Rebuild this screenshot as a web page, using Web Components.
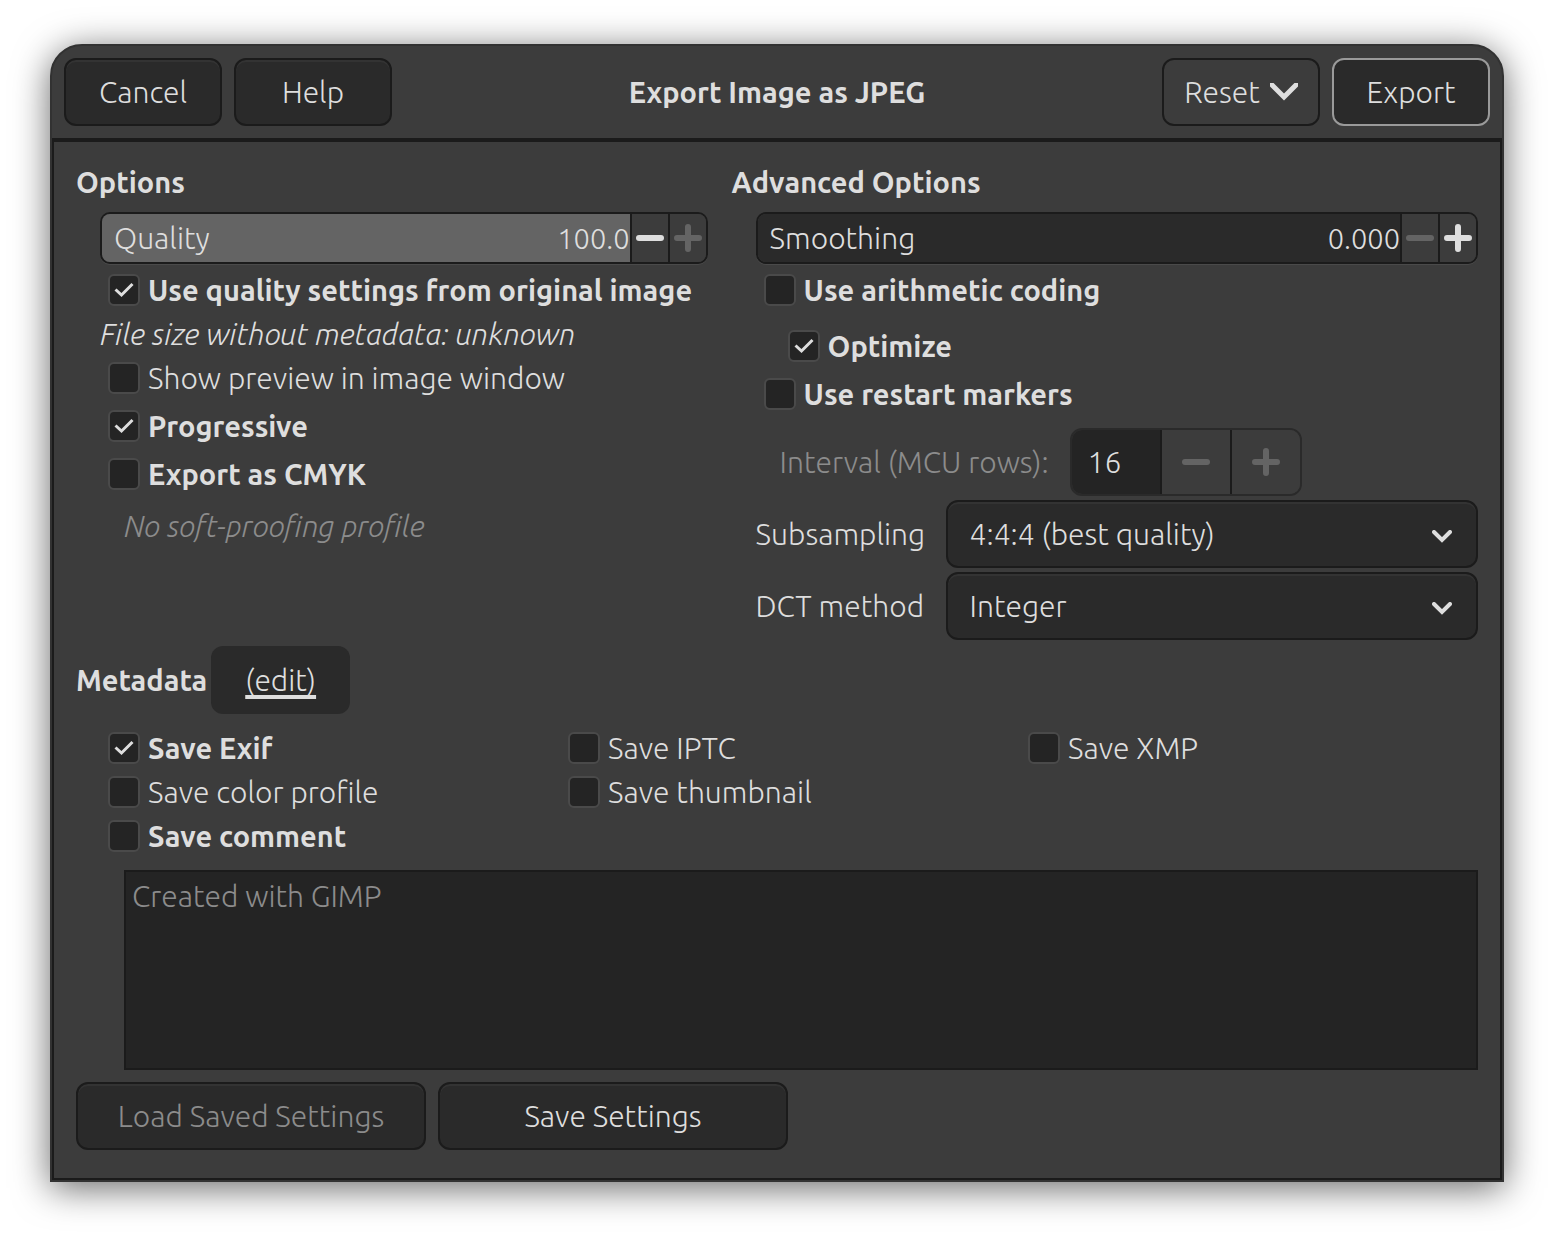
<!DOCTYPE html>
<html lang="en">
<head>
<meta charset="utf-8">
<meta name="viewport" content="width=device-width, initial-scale=1">
<title>Export Image as JPEG</title>
<style>
    :root {
        --bg: #3c3c3c;
        --button: #2a2a2a;
        --entry: #242424;
        --line: #1b1b1b;
        --edge: #323232;
        --text: #dedede;
        --dim: #8c8c8c;
        --fill: #646464;
        --strong-size: 29px;
    }

    body {
        margin: 0;
        padding: 44px 50px 56px;
        background: white;
        color: var(--text);
        font: 300 30px/44px Ubuntu, "Open Sans", "Noto Sans", sans-serif;
    }

    .column {
        display: flex;
        flex-direction: column;
        gap: 4px;
        padding-left: 24px;
    }

    .gap-above {
        margin-top: 8px;
    }

    .indent {
        margin-left: 24px;
    }

    .note {
        margin: -4px 0;
        font-style: italic;
    }

    .profile {
        margin: 4px 0 0 24px;
        color: var(--dim);
        font-style: italic;
    }

    .saves {
        display: grid;
        grid-template-columns: repeat(3, 1fr);
        column-gap: 2px;
        margin: 12px 0 12px 24px;
    }
</style>
</head>
<body>
<export-dialog heading="Export Image as JPEG">
    <dialog-button slot="start">Cancel</dialog-button>
    <dialog-button slot="start">Help</dialog-button>
    <dialog-button slot="end" kind="menu">Reset</dialog-button>
    <dialog-button slot="end" kind="default">Export</dialog-button>

    <option-group slot="options" heading="Options">
        <div class="column">
            <spin-scale label="Quality" value="100.0" fill="100%" at="max"></spin-scale>
            <check-option strong checked>Use quality settings from original image</check-option>
            <div class="note">File size without metadata: unknown</div>
            <check-option>Show preview in image window</check-option>
            <check-option strong checked>Progressive</check-option>
            <check-option strong>Export as CMYK</check-option>
            <div class="profile">No soft-proofing profile</div>
        </div>
    </option-group>

    <option-group slot="options" heading="Advanced Options">
        <div class="column">
            <spin-scale label="Smoothing" value="0.000" fill="0%" at="min"></spin-scale>
            <check-option strong>Use arithmetic coding</check-option>
            <check-option class="gap-above indent" strong checked>Optimize</check-option>
            <check-option strong>Use restart markers</check-option>
            <spin-entry class="gap-above indent" label="Interval (MCU rows):" value="16"></spin-entry>
            <combo-box label="Subsampling" value="4:4:4 (best quality)"></combo-box>
            <combo-box label="DCT method" value="Integer"></combo-box>
        </div>
    </option-group>

    <metadata-heading slot="metadata">Metadata</metadata-heading>
    <div slot="metadata" class="saves">
        <check-option strong checked>Save Exif</check-option>
        <check-option>Save IPTC</check-option>
        <check-option>Save XMP</check-option>
        <check-option>Save color profile</check-option>
        <check-option>Save thumbnail</check-option>
        <div></div>
        <check-option strong>Save comment</check-option>
    </div>
    <comment-box slot="metadata" value="Created with GIMP"></comment-box>

    <dialog-button slot="footer" kind="wide" disabled>Load Saved Settings</dialog-button>
    <dialog-button slot="footer" kind="wide">Save Settings</dialog-button>
</export-dialog>

<script>
// shared by every shadow root
const base = /* css */ `
    :host, *, *::before { box-sizing: border-box; }
    button, input, select, textarea { font: inherit; color: inherit; margin: 0; }
    h1, h2 { margin: 0; font-size: var(--strong-size); font-weight: 600; }
    svg { display: block; fill: none; stroke: currentColor; }
`

const minus = '<svg width="28" height="28" viewBox="0 0 28 28" stroke-width="6" stroke-linecap="round"><path d="M3 14h22"/></svg>'
const plus = '<svg width="28" height="28" viewBox="0 0 28 28" stroke-width="6" stroke-linecap="round"><path d="M3 14h22M14 3v22"/></svg>'

// The window frame: header bar, two columns of options, metadata and footer
class ExportDialog extends HTMLElement {
    connectedCallback() {
        this.attachShadow({ mode: 'open' }).innerHTML = /* html */ `
            <style>
            ${base}
            :host {
                display: block;
                border: 2px solid var(--edge);
                border-radius: 32px 32px 0 0;
                background: var(--bg);
                box-shadow: 0 6px 36px rgba(0, 0, 0, 0.6);
            }

            header {
                display: grid;
                grid-template-columns: 1fr auto 1fr;
                align-items: center;
                padding: 12px;
            }

            .start, .end, footer {
                display: flex;
                gap: 12px;
            }

            .end {
                justify-content: flex-end;
            }

            main {
                border: 2px solid var(--line);
                border-top-width: 4px;
                padding: 18px 22px 28px;
            }

            .options {
                display: grid;
                grid-template-columns: 11fr 13fr;
                gap: 24px;
                margin-bottom: 6px;
            }

            footer {
                margin-top: 12px;
            }
            </style>
            <header>
                <div class="start"><slot name="start"></slot></div>
                <h1>${this.getAttribute('heading')}</h1>
                <div class="end"><slot name="end"></slot></div>
            </header>
            <main>
                <div class="options"><slot name="options"></slot></div>
                <slot name="metadata"></slot>
                <footer><slot name="footer"></slot></footer>
            </main>
        `
    }
}

class OptionGroup extends HTMLElement {
    connectedCallback() {
        this.attachShadow({ mode: 'open' }).innerHTML = /* html */ `
            <style>
            ${base}
            :host { display: block; min-width: 0; }

            h2 {
                margin-bottom: 8px;
            }
            </style>
            <h2>${this.getAttribute('heading')}</h2>
            <slot></slot>
        `
    }
}

class DialogButton extends HTMLElement {
    connectedCallback() {
        const arrow = this.getAttribute('kind') === 'menu'
            ? '<svg width="28" height="18" viewBox="0 0 28 18" stroke-width="5"><path d="M-3-3 14 14 31-3"/></svg>'
            : ''

        this.attachShadow({ mode: 'open' }).innerHTML = /* html */ `
            <style>
            ${base}
            :host { display: block; }

            button {
                display: flex;
                align-items: center;
                justify-content: center;
                gap: 10px;
                min-width: 158px;
                height: 68px;
                padding: 0 16px;
                border: 2px solid var(--line);
                border-radius: 12px;
                background: var(--button);
                box-shadow: inset 0 2px #333;
            }

            :host([kind="menu"]) button {
                background: var(--bg);
                box-shadow: none;
            }

            :host([kind="default"]) button {
                border-color: #9a9a9a;
                box-shadow: none;
            }

            :host([kind="wide"]) button {
                min-width: 350px;
            }

            button:disabled {
                color: var(--dim);
            }
            </style>
            <button type="button" ${this.hasAttribute('disabled') ? 'disabled' : ''}><slot></slot>${arrow}</button>
        `
    }
}

class CheckOption extends HTMLElement {
    connectedCallback() {
        this.attachShadow({ mode: 'open' }).innerHTML = /* html */ `
            <style>
            ${base}
            :host { display: block; }
            :host([strong]) { font-size: var(--strong-size); font-weight: 600; }

            label {
                display: flex;
                align-items: center;
                gap: 8px;
                padding-left: 8px;
                white-space: nowrap;
            }

            .box {
                display: grid;
            }

            input, svg {
                grid-area: 1 / 1;
                width: 32px;
                height: 32px;
            }

            input {
                appearance: none;
                border: 2px solid #4a4a4a;
                border-radius: 6px;
                background: var(--entry);
            }

            svg {
                visibility: hidden;
                pointer-events: none;
            }

            input:checked + svg {
                visibility: visible;
            }
            </style>
            <label>
                <span class="box">
                    <input type="checkbox" ${this.hasAttribute('checked') ? 'checked' : ''}>
                    <svg viewBox="0 0 32 32" stroke-width="3"><path d="M7.500 15.500 13.500 21 24.500 10"/></svg>
                </span>
                <slot></slot>
            </label>
        `
    }
}

// Entry whose background shows the value as a bar
class SpinScale extends HTMLElement {
    connectedCallback() {
        const label = this.getAttribute('label')
        const at = this.getAttribute('at')

        this.attachShadow({ mode: 'open' }).innerHTML = /* html */ `
            <style>
            ${base}
            :host {
                display: flex;
                height: 52px;
                border: 2px solid var(--line);
                border-radius: 10px;
                overflow: hidden;
                box-shadow: 0 1px #4a4a4a;
            }

            .field {
                display: flex;
                align-items: center;
                flex: 1;
                min-width: 0;
                padding-left: 12px;
                background: linear-gradient(var(--fill), var(--fill)) 0 0 / ${this.getAttribute('fill')} 100% no-repeat var(--button);
            }

            input {
                flex: 1;
                min-width: 0;
                height: 44px;
                padding: 0;
                border: 0;
                background: none;
                font-size: 29px;
                text-align: right;
            }

            button {
                width: 38px;
                padding: 0 4px;
                border: 0;
                border-left: 2px solid var(--line);
                background: var(--bg);
            }

            button:disabled {
                color: var(--fill);
            }
            </style>
            <div class="field">
                <label for="value">${label}</label>
                <input type="text" id="value" value="${this.getAttribute('value')}">
            </div>
            <button type="button" aria-label="Decrease" ${at === 'min' ? 'disabled' : ''}>${minus}</button>
            <button type="button" aria-label="Increase" ${at === 'max' ? 'disabled' : ''}>${plus}</button>
        `
    }
}

class SpinEntry extends HTMLElement {
    connectedCallback() {
        this.attachShadow({ mode: 'open' }).innerHTML = /* html */ `
            <style>
            ${base}
            :host {
                display: flex;
                align-items: center;
                gap: 20px;
            }

            label {
                width: 270px;
                color: var(--dim);
                white-space: nowrap;
            }

            .spin {
                display: flex;
                height: 68px;
                border: 2px solid #2a2a2a;
                border-radius: 12px;
                overflow: hidden;
            }

            input {
                width: 88px;
                padding: 0 0 0 16px;
                border: 0;
                background: var(--entry);
            }

            button {
                display: grid;
                place-items: center;
                width: 70px;
                padding: 0;
                border: 0;
                border-left: 2px solid var(--line);
                background: var(--bg);
                color: var(--fill);
            }
            </style>
            <label for="value">${this.getAttribute('label')}</label>
            <div class="spin">
                <input type="text" id="value" value="${this.getAttribute('value')}" disabled>
                <button type="button" aria-label="Decrease" disabled>${minus}</button>
                <button type="button" aria-label="Increase" disabled>${plus}</button>
            </div>
        `
    }
}

class ComboBox extends HTMLElement {
    connectedCallback() {
        this.attachShadow({ mode: 'open' }).innerHTML = /* html */ `
            <style>
            ${base}
            :host {
                display: grid;
                grid-template-columns: 170px 1fr;
                align-items: center;
                column-gap: 20px;
            }

            .combo {
                display: grid;
                align-items: center;
            }

            select, svg {
                grid-area: 1 / 1;
            }

            select {
                appearance: none;
                width: 100%;
                height: 68px;
                padding: 0 60px 0 22px;
                border: 2px solid var(--line);
                border-radius: 12px;
                background: var(--button);
                box-shadow: inset 0 2px #333;
            }

            svg {
                justify-self: end;
                margin: 4px 26px 0 0;
                pointer-events: none;
            }
            </style>
            <label for="choice">${this.getAttribute('label')}</label>
            <div class="combo">
                <select id="choice"><option>${this.getAttribute('value')}</option></select>
                <svg width="20" height="13" viewBox="0 0 20 13" stroke-width="4" stroke-linecap="round"><path d="M2 2 10 10 18 2"/></svg>
            </div>
        `
    }
}

class MetadataHeading extends HTMLElement {
    connectedCallback() {
        this.attachShadow({ mode: 'open' }).innerHTML = /* html */ `
            <style>
            ${base}
            :host {
                display: flex;
                align-items: center;
                gap: 4px;
            }

            a {
                padding: 12px 34px;
                border-radius: 12px;
                background: var(--button);
                color: inherit;
                text-decoration: underline 4px;
                text-decoration-skip-ink: none;
                text-underline-offset: 4px;
            }
            </style>
            <h2><slot></slot></h2>
            <a href="#edit">(edit)</a>
        `
    }
}

class CommentBox extends HTMLElement {
    connectedCallback() {
        this.attachShadow({ mode: 'open' }).innerHTML = /* html */ `
            <style>
            ${base}
            :host {
                display: block;
                margin-left: 48px;
            }

            textarea {
                display: block;
                width: 100%;
                height: 200px;
                padding: 2px 6px;
                border: 2px solid var(--line);
                background: var(--entry);
                color: var(--dim);
                resize: none;
            }
            </style>
            <textarea aria-label="Comment" disabled>${this.getAttribute('value')}</textarea>
        `
    }
}

customElements.define('export-dialog', ExportDialog)
customElements.define('option-group', OptionGroup)
customElements.define('dialog-button', DialogButton)
customElements.define('check-option', CheckOption)
customElements.define('spin-scale', SpinScale)
customElements.define('spin-entry', SpinEntry)
customElements.define('combo-box', ComboBox)
customElements.define('metadata-heading', MetadataHeading)
customElements.define('comment-box', CommentBox)
</script>
</body>
</html>
